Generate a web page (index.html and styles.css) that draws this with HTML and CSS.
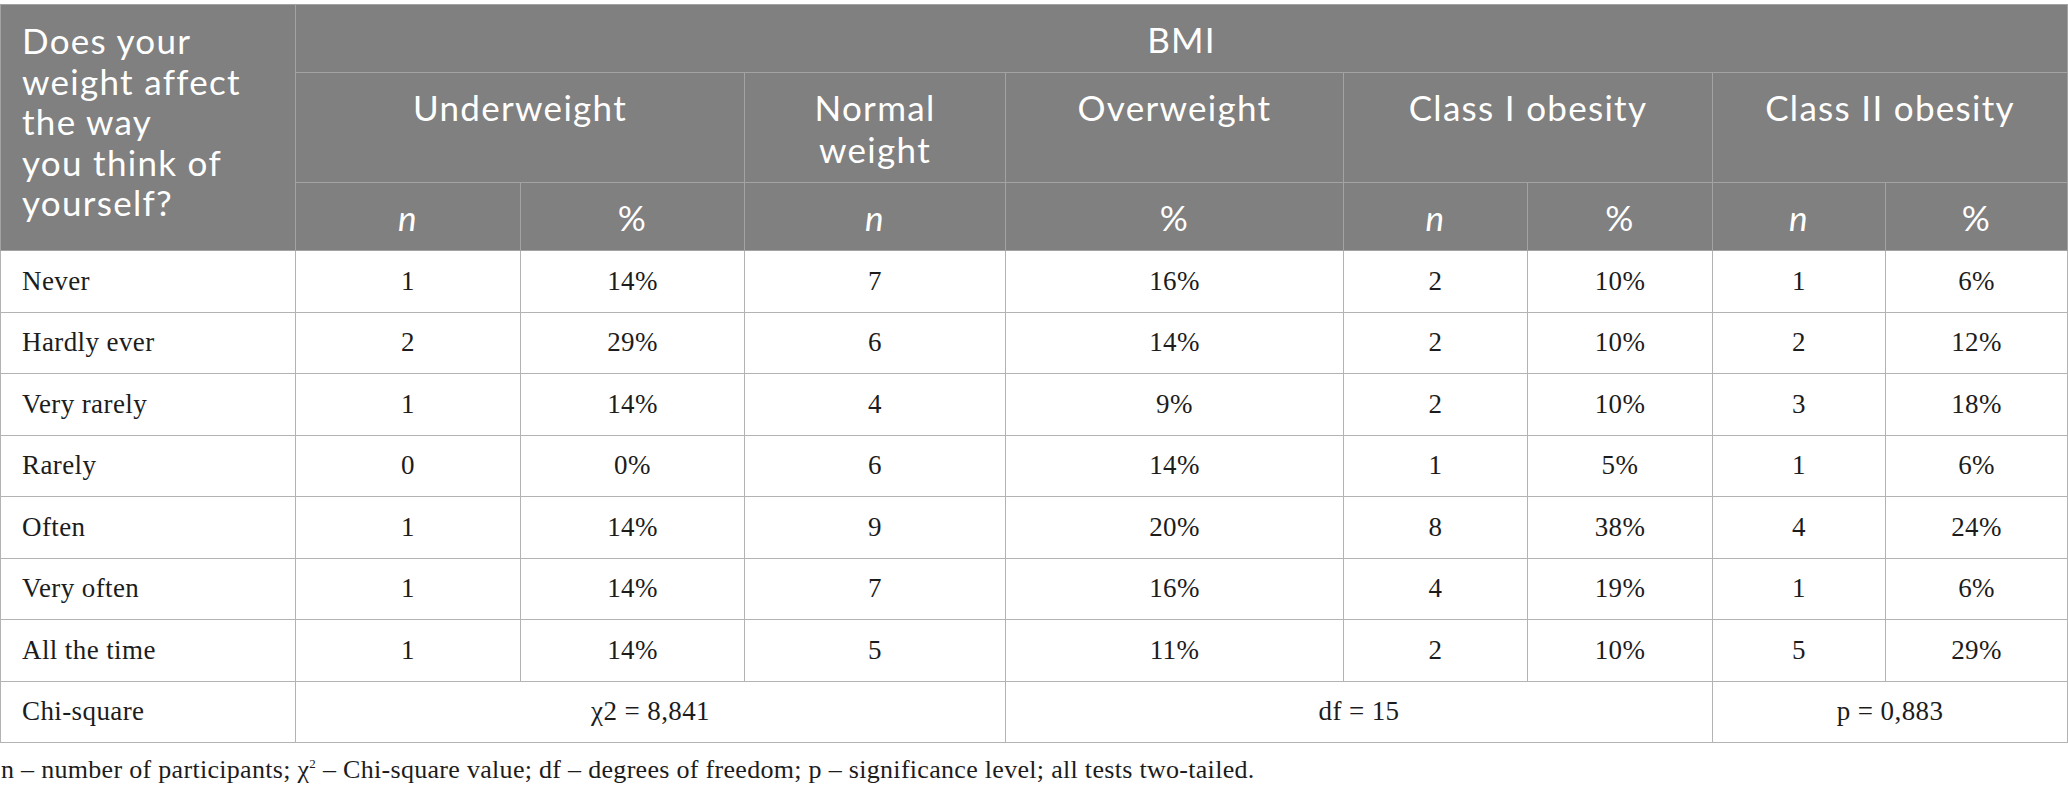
FILE: index.html
```html
<!DOCTYPE html>
<html lang="en">
<head>
<meta charset="utf-8">
<title>BMI table</title>
<link rel="stylesheet" href="styles.css">
</head>
<body>
<div class="wrap">
<table class="data">
  <colgroup>
    <col class="c0"><col class="c1"><col class="c2"><col class="c3"><col class="c4"><col class="c5"><col class="c6"><col class="c7"><col class="c8">
  </colgroup>
  <thead>
    <tr class="h1">
      <th rowspan="3" class="q">Does your<br>weight affect<br>the way<br>you think of<br>yourself?</th>
      <th colspan="8">BMI</th>
    </tr>
    <tr class="h2">
      <th colspan="2">Underweight</th>
      <th>Normal<br>weight</th>
      <th>Overweight</th>
      <th colspan="2">Class I obesity</th>
      <th colspan="2">Class II obesity</th>
    </tr>
    <tr class="h3">
      <th><i>n</i></th><th>%</th><th><i>n</i></th><th>%</th><th><i>n</i></th><th>%</th><th><i>n</i></th><th>%</th>
    </tr>
  </thead>
  <tbody>
    <tr><td class="lbl">Never</td><td>1</td><td>14%</td><td>7</td><td>16%</td><td>2</td><td>10%</td><td>1</td><td>6%</td></tr>
    <tr><td class="lbl">Hardly ever</td><td>2</td><td>29%</td><td>6</td><td>14%</td><td>2</td><td>10%</td><td>2</td><td>12%</td></tr>
    <tr><td class="lbl">Very rarely</td><td>1</td><td>14%</td><td>4</td><td>9%</td><td>2</td><td>10%</td><td>3</td><td>18%</td></tr>
    <tr><td class="lbl">Rarely</td><td>0</td><td>0%</td><td>6</td><td>14%</td><td>1</td><td>5%</td><td>1</td><td>6%</td></tr>
    <tr><td class="lbl">Often</td><td>1</td><td>14%</td><td>9</td><td>20%</td><td>8</td><td>38%</td><td>4</td><td>24%</td></tr>
    <tr><td class="lbl">Very often</td><td>1</td><td>14%</td><td>7</td><td>16%</td><td>4</td><td>19%</td><td>1</td><td>6%</td></tr>
    <tr><td class="lbl">All the time</td><td>1</td><td>14%</td><td>5</td><td>11%</td><td>2</td><td>10%</td><td>5</td><td>29%</td></tr>
    <tr><td class="lbl">Chi-square</td><td colspan="3">χ2 = 8,841</td><td colspan="3">df = 15</td><td colspan="2">p = 0,883</td></tr>
  </tbody>
</table>
<p class="note">n – number of participants; χ<sup>2</sup> – Chi-square value; df – degrees of freedom; p – significance level; all tests two-tailed.</p>
</div>
</body>
</html>
```

FILE: styles.css
```css
html, body {
  margin: 0;
  padding: 0;
  background: #ffffff;
}

.wrap {
  padding-top: 4px;
}

.data {
  width: 2067px;
  table-layout: fixed;
  border-collapse: collapse;
}

.c0 { width: 295px; }
.c1 { width: 225px; }
.c2 { width: 224px; }
.c3 { width: 261px; }
.c4 { width: 338px; }
.c5 { width: 184px; }
.c6 { width: 185px; }
.c7 { width: 173px; }
.c8 { width: 182px; }

.data th {
  background: #7f807f;
  color: #ffffff;
  font-family: Lato, "Open Sans", sans-serif;
  font-weight: 400;
  font-size: 35px;
  line-height: 42px;
  text-align: center;
  vertical-align: top;
  padding: 13px 4px 0 4px;
  border: 1px solid #a3a3a3;
  letter-spacing: 1.3px;
}

.data th i {
  font-style: italic;
}

.data th.q {
  text-align: left;
  line-height: 40.5px;
  padding-left: 21px;
  padding-top: 15px;
}

.h1 { height: 68px; }
.h2 { height: 110px; }
.h3 { height: 68px; }

.data td {
  font-family: "Liberation Serif", "Times New Roman", serif;
  font-size: 27px;
  color: #1c1c1c;
  text-align: center;
  vertical-align: middle;
  height: 61.5px;
  padding: 0 8px;
  border: 1px solid #b3b3b3;
  box-sizing: border-box;
  letter-spacing: 0.4px;
}

.data td.lbl {
  text-align: left;
  padding-left: 21px;
}

.note {
  margin: 12px 0 0 1px;
  font-family: "Liberation Serif", "Times New Roman", serif;
  font-size: 26px;
  color: #1c1c1c;
  letter-spacing: 0.3px;
}

.note sup {
  font-size: 13px;
  vertical-align: top;
  line-height: 1;
  position: relative;
  top: 2px;
}
```
